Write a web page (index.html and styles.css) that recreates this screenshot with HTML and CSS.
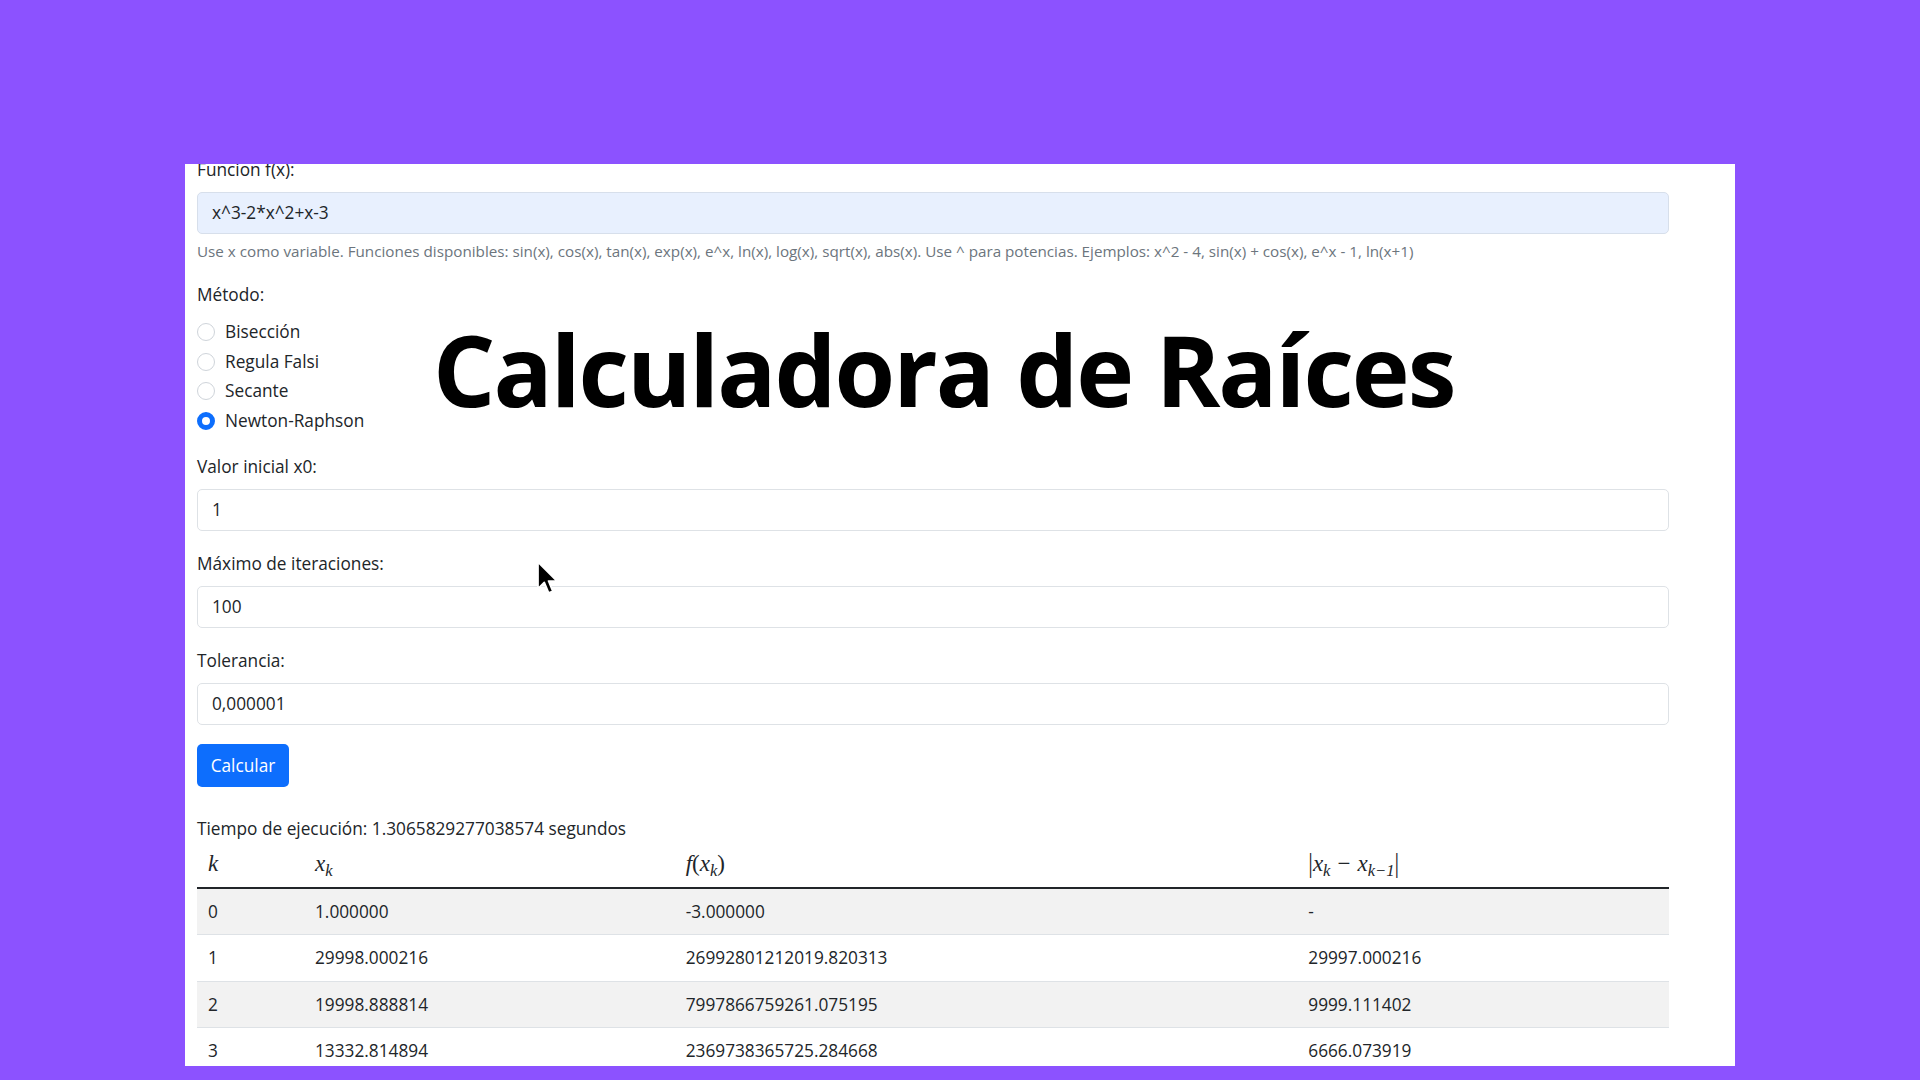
FILE: index.html
```html
<!DOCTYPE html>
<html lang="es">
<head>
<meta charset="utf-8">
<title>Calculadora de Raíces</title>
<link rel="stylesheet" href="styles.css">
</head>
<body>
<div class="stage">
  <div class="panel">
    <div class="content">
      <div class="group">
        <label class="lbl">Funcion f(x):</label>
        <div class="input autofill">x^3-2*x^2+x-3</div>
        <div class="help">Use x como variable. Funciones disponibles: sin(x), cos(x), tan(x), exp(x), e^x, ln(x), log(x), sqrt(x), abs(x). Use ^ para potencias. Ejemplos: x^2 - 4, sin(x) + cos(x), e^x - 1, ln(x+1)</div>
      </div>
      <div class="group method">
        <label class="lbl method-lbl">Método:</label>
        <div class="radio"><span class="dot"></span><span>Bisección</span></div>
        <div class="radio"><span class="dot"></span><span>Regula Falsi</span></div>
        <div class="radio"><span class="dot"></span><span>Secante</span></div>
        <div class="radio"><span class="dot on"></span><span>Newton-Raphson</span></div>
      </div>
      <div class="group">
        <label class="lbl">Valor inicial x0:</label>
        <div class="input">1</div>
      </div>
      <div class="group">
        <label class="lbl">Máximo de iteraciones:</label>
        <div class="input">100</div>
      </div>
      <div class="group">
        <label class="lbl">Tolerancia:</label>
        <div class="input">0,000001</div>
      </div>
      <button class="btn">Calcular</button>
      <p class="time">Tiempo de ejecución: 1.3065829277038574 segundos</p>
      <table class="tbl">
        <colgroup>
          <col class="c1"><col class="c2"><col class="c3"><col class="c4">
        </colgroup>
        <thead>
          <tr>
            <th><span class="m">k</span></th>
            <th><span class="m">x<sub>k</sub></span></th>
            <th><span class="m">f</span><span class="mr">(</span><span class="m">x<sub>k</sub></span><span class="mr">)</span></th>
            <th><span class="bar">|</span><span class="m">x<sub>k</sub></span><span class="op">−</span><span class="m">x<sub>k−1</sub></span><span class="bar">|</span></th>
          </tr>
        </thead>
        <tbody>
          <tr><td>0</td><td>1.000000</td><td>-3.000000</td><td>-</td></tr>
          <tr><td>1</td><td>29998.000216</td><td>26992801212019.820313</td><td>29997.000216</td></tr>
          <tr><td>2</td><td>19998.888814</td><td>7997866759261.075195</td><td>9999.111402</td></tr>
          <tr><td>3</td><td>13332.814894</td><td>2369738365725.284668</td><td>6666.073919</td></tr>
        </tbody>
      </table>
    </div>
  </div>
  <h1 class="title">Calculadora de Raíces</h1>
  <svg class="cursor" width="22" height="34" viewBox="0 0 13 20">
    <path d="M0.6 0.6 L0.6 16.2 L4.3 12.6 L6.9 18.8 L9.3 17.8 L6.8 11.8 L11.8 11.8 Z" fill="#000" stroke="#fff" stroke-width="1" stroke-linejoin="round"/>
  </svg>
</div>
</body>
</html>
```
FILE: styles.css
```css
html, body {
  margin: 0;
  padding: 0;
}
body {
  background: #8c52ff;
  font-family: "Open Sans", "Noto Sans", sans-serif;
  color: #212529;
}
.stage {
  position: relative;
  width: 1920px;
  height: 1080px;
  overflow: hidden;
  box-sizing: border-box;
  padding: 164px 0 0 185px;
}
.panel {
  width: 1550px;
  height: 902px;
  background: #fff;
  overflow: hidden;
}
.content {
  margin-top: -7px;
  padding: 0 66px 0 12px;
  font-size: 17.25px;
  line-height: 26px;
}
.group + .group {
  margin-top: 20px;
}
.group.method {
  margin-top: 20.5px;
}
.lbl {
  display: block;
  margin-bottom: 8.9px;
}
.method-lbl {
  margin-bottom: 10.5px;
}
.input {
  height: 42px;
  box-sizing: border-box;
  border: 1px solid #dee2e6;
  border-radius: 5px;
  padding: 0 14px;
  display: flex;
  align-items: center;
  background: #fff;
}
.input.autofill {
  background: #e8f0fe;
  border-color: #d7dfeb;
}
.help {
  margin-top: 6px;
  font-size: 15.23px;
  line-height: 22px;
  color: #6c757d;
}
.radio {
  display: flex;
  align-items: center;
  gap: 10px;
  height: 26px;
  margin-bottom: 3.7px;
}
.radio:last-child {
  margin-bottom: 0;
}
.dot {
  width: 18px;
  height: 18px;
  box-sizing: border-box;
  border: 1px solid #cfd4da;
  border-radius: 50%;
  background: #fff;
  flex: none;
}
.dot.on {
  border: 5px solid #0d6efd;
  background: #fff;
}
.btn {
  display: block;
  margin-top: 19.5px;
  height: 42.4px;
  width: 92px;
  border: none;
  border-radius: 5px;
  background: #0d6efd;
  color: #fff;
  font-family: inherit;
  font-size: 17.25px;
  padding: 0;
}
.time {
  margin: 29.2px 0 0;
}
.tbl {
  width: 1472px;
  border-collapse: collapse;
  table-layout: fixed;
}
.c1 { width: 107px; }
.c2 { width: 370.7px; }
.c3 { width: 622.6px; }
.c4 { width: 371.7px; }
.tbl th {
  text-align: left;
  font-weight: normal;
  padding: 9.5px 11px 9.7px;
  border-bottom: 2px solid #212529;
  font-family: "Liberation Serif", "DejaVu Serif", serif;
  font-size: 23px;
  line-height: 26px;
}
.tbl td {
  padding: 9.75px 11px;
  border-bottom: 1px solid #dee2e6;
}
.tbl tbody tr:nth-child(odd) td {
  background: #f2f2f2;
}
.m {
  font-style: italic;
}
.mr {
  font-style: normal;
}
.m sub {
  font-size: 0.72em;
  line-height: 0;
  vertical-align: -0.3em;
}
.op {
  padding: 0 7px;
}
.bar {
  font-style: normal;
  display: inline-block;
  transform: scaleY(1.2);
}
.title {
  position: absolute;
  left: 433px;
  top: 320px;
  margin: 0;
  font-family: "Open Sans", sans-serif;
  font-weight: 700;
  font-size: 98px;
  line-height: 1;
  letter-spacing: -2px;
  color: #000;
  white-space: nowrap;
}
.cursor {
  position: absolute;
  left: 537px;
  top: 561px;
}
```
